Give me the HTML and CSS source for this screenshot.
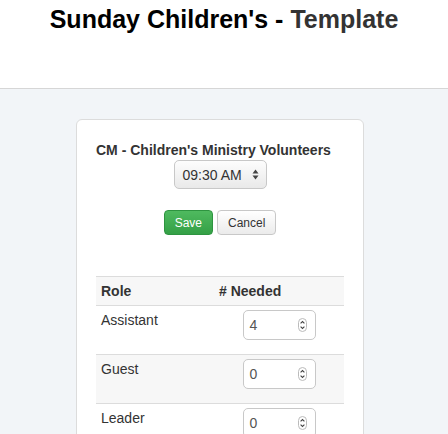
FILE: index.html
```html
<!DOCTYPE html>
<html>
<head>
<meta charset="utf-8">
<link rel="stylesheet" href="styles.css">
</head>
<body>
<header class="top">
  <h1 class="title">Sunday Children's - <span class="title-muted">Template</span></h1>
</header>
<main class="main">
  <section class="card">
    <h2 class="card-title">CM - Children's Ministry Volunteers</h2>
    <div class="time-row">
      <div class="select">
        <span class="select-text">09:30 AM</span>
        <svg class="select-arrows" width="7" height="11" viewBox="0 0 7 11"><path d="M3.5 0.5 L6.5 4.5 L0.5 4.5 Z M3.5 10.5 L6.5 6.5 L0.5 6.5 Z" fill="#444"/></svg>
      </div>
    </div>
    <div class="actions">
      <button class="btn btn-save">Save</button>
      <button class="btn btn-cancel">Cancel</button>
    </div>
    <table class="roles">
      <thead>
        <tr><th class="col-role">Role</th><th class="col-needed"># Needed</th></tr>
      </thead>
      <tbody>
        <tr>
          <td class="role">Assistant</td>
          <td class="needed"><div class="num"><span class="num-val">4</span><span class="spin"><svg width="9" height="14" viewBox="0 0 9 14"><rect x="0.5" y="0.5" width="8" height="13" rx="4" fill="#fff" stroke="#bbb"/><path d="M2.6 5.4 L4.5 3.5 L6.4 5.4 M2.6 8.6 L4.5 10.5 L6.4 8.6" fill="none" stroke="#444" stroke-width="1.1"/></svg></span></div></td>
        </tr>
        <tr class="alt">
          <td class="role">Guest</td>
          <td class="needed"><div class="num"><span class="num-val">0</span><span class="spin"><svg width="9" height="14" viewBox="0 0 9 14"><rect x="0.5" y="0.5" width="8" height="13" rx="4" fill="#fff" stroke="#bbb"/><path d="M2.6 5.4 L4.5 3.5 L6.4 5.4 M2.6 8.6 L4.5 10.5 L6.4 8.6" fill="none" stroke="#444" stroke-width="1.1"/></svg></span></div></td>
        </tr>
        <tr>
          <td class="role">Leader</td>
          <td class="needed"><div class="num"><span class="num-val">0</span><span class="spin"><svg width="9" height="14" viewBox="0 0 9 14"><rect x="0.5" y="0.5" width="8" height="13" rx="4" fill="#fff" stroke="#bbb"/><path d="M2.6 5.4 L4.5 3.5 L6.4 5.4 M2.6 8.6 L4.5 10.5 L6.4 8.6" fill="none" stroke="#444" stroke-width="1.1"/></svg></span></div></td>
        </tr>
      </tbody>
    </table>
  </section>
</main>
</body>
</html>
```
FILE: styles.css
```css
* { box-sizing: border-box; }
html, body { margin: 0; padding: 0; }
body {
  font-family: "Liberation Sans", Arial, sans-serif;
  color: #333;
  background: #f2f5f8;
  overflow: hidden;
  height: 434px;
}
.top {
  background: #fff;
  height: 89px;
  border-bottom: 1px solid #d6d6d6;
  padding-top: 4px;
}
.title {
  margin: 0;
  text-align: center;
  font-size: 25px;
  line-height: 30px;
  font-weight: bold;
  color: #000;
}
.title-muted { color: #333; }
.main {
  padding: 30px 0 0 76px;
  height: 345px;
  overflow: hidden;
}
.card {
  width: 288px;
  height: 330px;
  background: #fff;
  border: 1px solid #dcdcdc;
  border-radius: 6px;
  padding: 20px 19px;
  overflow: hidden;
}
.card-title {
  margin: 0;
  font-size: 14px;
  line-height: 20px;
  font-weight: bold;
  color: #333;
}
.time-row { display: flex; justify-content: center; }
.select {
  width: 93px;
  height: 29px;
  border: 1px solid #c8c8c8;
  border-radius: 5px;
  background: linear-gradient(#fdfdfd, #e9e9e9);
  display: flex;
  align-items: center;
  justify-content: space-between;
  padding: 0 7px 0 8px;
  font-size: 14px;
  color: #333;
}
.select-arrows { display: block; }
.actions {
  display: flex;
  justify-content: center;
  gap: 4px;
  margin-top: 21px;
}
.btn {
  font-family: inherit;
  font-size: 12px;
  height: 25px;
  padding: 0 10px;
  border-radius: 4px;
  margin: 0;
}
.btn-save {
  color: #fff;
  background: linear-gradient(#4fba5f, #34a046);
  border: 1px solid #2e9440;
}
.btn-cancel {
  color: #333;
  background: linear-gradient(#fff, #ebebeb);
  border: 1px solid #c8c8c8;
}
.roles {
  margin-top: 41px;
  width: 248px;
  border-collapse: collapse;
  font-size: 14px;
  line-height: 20px;
}
.roles th {
  text-align: left;
  font-weight: bold;
  color: #333;
  background: #f7f7f7;
  border-top: 1px solid #dcdcdc;
  border-bottom: 1px solid #dcdcdc;
  padding: 4px 5px;
}
.col-role { width: 118px; }
.roles td {
  vertical-align: top;
  padding: 4px 5px 14px;
  border-bottom: 1px solid #dcdcdc;
}
.roles tr.alt td { background: #f7f7f7; }
.needed { text-align: center; }
.num {
  display: inline-flex;
  align-items: center;
  justify-content: space-between;
  width: 73px;
  height: 30px;
  border: 1px solid #c8c8c8;
  border-radius: 5px;
  background: #fff;
  padding: 0 8px 0 6px;
  color: #555;
  vertical-align: top;
}
.spin svg { display: block; }
```
